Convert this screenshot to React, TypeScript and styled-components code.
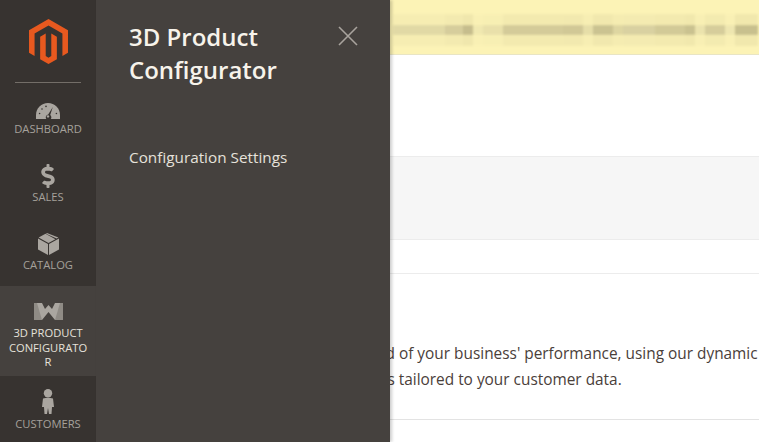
import React from 'react';
import styled, { createGlobalStyle } from 'styled-components';
import { FaDollarSign } from 'react-icons/fa';

const GlobalStyle = createGlobalStyle`
  html, body {
    margin: 0;
    padding: 0;
    background: #fff;
    font-family: 'Open Sans', 'Liberation Sans', sans-serif;
  }
`;

const Page = styled.div`
  display: flex;
  width: 759px;
  height: 442px;
  overflow: hidden;
`;

const Sidebar = styled.nav`
  flex: 0 0 96px;
  display: flex;
  flex-direction: column;
  background: #373330;
`;

const LogoBox = styled.div`
  flex: none;
  display: flex;
  justify-content: center;
  height: 83px;
  padding-top: 19px;
  box-sizing: border-box;
  margin: 0 15px;
  border-bottom: 1px solid #736e68;
  svg {
    width: 39px;
    height: 45px;
    fill: #e8591f;
  }
`;

const NavList = styled.div`
  flex: none;
  display: flex;
  flex-direction: column;
`;

const NavItem = styled.a<{ $active?: boolean; $top: number; $h: number }>`
  flex: none;
  display: flex;
  flex-direction: column;
  align-items: center;
  padding-top: ${(p) => p.$top}px;
  height: ${(p) => p.$h}px;
  box-sizing: border-box;
  background: ${(p) => (p.$active ? '#45413e' : 'transparent')};
  color: ${(p) => (p.$active ? '#e6e2db' : '#a5a19b')};
`;

const NavIcon = styled.div<{ $height: number }>`
  display: flex;
  align-items: center;
  justify-content: center;
  height: ${(p) => p.$height}px;
  svg {
    display: block;
    fill: #aaa6a0;
  }
`;

const NavLabel = styled.span`
  display: block;
  width: 82px;
  font-size: 11.2px;
  line-height: 14.6px;
  text-align: center;
  text-transform: uppercase;
  overflow-wrap: anywhere;
`;

const Content = styled.main`
  flex: 1;
  position: relative;
  min-width: 0;
  display: flex;
  flex-direction: column;
`;

const Panel = styled.aside`
  position: absolute;
  top: 0;
  left: 0;
  bottom: 0;
  width: 294px;
  padding: 20px 0 0 33px;
  box-sizing: border-box;
  background: #45413e;
  box-shadow: 2px 0 3px rgba(0, 0, 0, 0.2);
  z-index: 2;
`;

const PanelTitle = styled.h2`
  margin: 0;
  width: 200px;
  font-size: 24px;
  line-height: 33px;
  font-weight: 600;
  color: #f7f3eb;
`;

const CloseButton = styled.button`
  position: absolute;
  top: 26px;
  right: 32px;
  width: 20px;
  height: 20px;
  padding: 0;
  border: 0;
  background: none;
  svg {
    display: block;
    stroke: #a8a39d;
    stroke-width: 1.6;
  }
`;

const PanelLink = styled.a`
  display: block;
  margin-top: 60px;
  font-size: 15.3px;
  line-height: 22px;
  color: #e6e2db;
`;

const Banner = styled.div`
  flex: none;
  height: 55px;
  box-sizing: border-box;
  padding-top: 14px;
  background: #fcf3b6;
  border-bottom: 1px solid #e9e5c4;
  overflow: hidden;
`;

const BlurRow = styled.div<{ $pale?: boolean }>`
  display: flex;
  height: ${(p) => (p.$pale ? '11px' : '10px')};
  margin-left: 297px;
  filter: blur(1px);
  opacity: ${(p) => (p.$pale ? 0.2 : 0.95)};
`;

const BlurCell = styled.span<{ $w: number; $c: string }>`
  flex: 0 0 ${(p) => p.$w}px;
  background: ${(p) => p.$c};
`;

const Band = styled.section<{ $h: number; $grey?: boolean }>`
  flex: none;
  height: ${(p) => p.$h}px;
  box-sizing: border-box;
  background: ${(p) => (p.$grey ? '#f6f6f6' : '#fff')};
  border-bottom: 1px solid #ececec;
`;

const Intro = styled.section`
  flex: none;
  height: 146px;
  box-sizing: border-box;
  padding: 67px 0 0 30px;
  background: #fff;
  border-bottom: 1px solid #e3e3e3;
`;

const IntroText = styled.p`
  margin: 0;
  width: 633px;
  font-size: 15.4px;
  line-height: 26px;
  color: #4a403a;
`;

const Rest = styled.div`
  flex: 1;
  background: #fff;
`;

const cells: [number, string][] = [
  [52, '#e0d8a5'], [18, '#d4cb9b'], [10, '#c4bb8b'], [10, '#f0e8b0'], [20, '#e8e0aa'],
  [60, '#d2c998'], [20, '#cfc695'], [10, '#e5dda8'], [20, '#c9c190'], [10, '#ddd5a0'],
  [32, '#d8d0a0'], [30, '#d0c896'], [10, '#c8c08e'], [10, '#ebe3ad'], [20, '#d4cc9a'],
  [10, '#eee6b0'], [23, '#c6be8c'],
];

const BlurLine = ({ pale }: { pale?: boolean }) => (
  <BlurRow $pale={pale}>
    {cells.map(([w, c], i) => (
      <BlurCell key={i} $w={w} $c={c} />
    ))}
  </BlurRow>
);

const GaugeIcon = () => (
  <svg width="24" height="16" viewBox="0 0 24 16">
    <path d="M0 16V12C0 5.4 5.4 0 12 0s12 5.4 12 12v4z" />
    <g fill="#373330">
      <circle cx="3.6" cy="10.5" r="0.8" />
      <circle cx="6" cy="6" r="0.8" />
      <circle cx="10" cy="3.4" r="0.8" />
      <circle cx="20.4" cy="10.5" r="0.8" />
      <path d="M16.8 4l-2.6 8a2.8 2.8 0 1 1-2-.5z" />
    </g>
    <circle cx="12" cy="13.4" r="1.2" />
  </svg>
);

const BoxIcon = () => (
  <svg width="21" height="22" viewBox="0 0 21 22">
    <path d="M10 11L0 5.6V16.4L10 22z" />
    <path d="M11 11L21 5.6V16.4L11 22z" />
    <path d="M0.6 4.6L7.5 0.8 17.4 6.2 10.5 10z" />
    <path d="M9 0L20.4 4.6 18.6 5.6 8 0.8z" />
  </svg>
);

const WaveIcon = () => (
  <svg width="29" height="17" viewBox="0 0 29 17">
    <path d="M0 0H8L11 6 14.5 2 18 6 21 0H29V17H21L14.5 9 8 17H0z" />
    <path d="M0 0H3L8 17H0z" fill="#8f8b85" />
    <path d="M29 0H26L21 17H29z" fill="#8f8b85" />
  </svg>
);

const PersonIcon = () => (
  <svg width="14" height="25" viewBox="0 0 14 25">
    <circle cx="7" cy="4.2" r="4.2" />
    <path d="M2 9.5Q7 8 12 9.5L13 18H11L10.5 25H8L7 19 6 25H3.5L3 18H1z" />
  </svg>
);

const MagentoLogo = () => (
  <svg viewBox="1.6 0 20.8 24">
    <path d="M12 24l-4.455-2.572v-12l2.97-1.714v12.001l1.485.902 1.485-.902V7.714l2.971 1.714v12L12 24zM22.391 6v12l-2.969 1.714V7.714L12 3.429 4.574 7.714v12L1.609 18V6L12 0l10.391 6z" />
  </svg>
);

const App: React.FC = () => (
  <>
    <GlobalStyle />
    <Page>
      <Sidebar>
        <LogoBox>
          <MagentoLogo />
        </LogoBox>
        <NavList>
          <NavItem $top={16} $h={68}>
            <NavIcon $height={23}>
              <GaugeIcon />
            </NavIcon>
            <NavLabel>Dashboard</NavLabel>
          </NavItem>
          <NavItem $top={10} $h={68}>
            <NavIcon $height={29}>
              <FaDollarSign size={24} color="#aaa6a0" />
            </NavIcon>
            <NavLabel>Sales</NavLabel>
          </NavItem>
          <NavItem $top={10} $h={67}>
            <NavIcon $height={29}>
              <BoxIcon />
            </NavIcon>
            <NavLabel>Catalog</NavLabel>
          </NavItem>
          <NavItem $active $top={10} $h={90}>
            <NavIcon $height={30}>
              <WaveIcon />
            </NavIcon>
            <NavLabel>3D Product Configurator</NavLabel>
          </NavItem>
          <NavItem $top={10} $h={66}>
            <NavIcon $height={31}>
              <PersonIcon />
            </NavIcon>
            <NavLabel>Customers</NavLabel>
          </NavItem>
        </NavList>
      </Sidebar>
      <Content>
        <Banner>
          <BlurLine pale />
          <BlurLine />
          <BlurLine pale />
        </Banner>
        <Band $h={102} />
        <Band $h={83} $grey />
        <Band $h={34} />
        <Intro>
          <IntroText>
            Gain new insights and take command of your business' performance, using our dynamic product,
            order, and customer reports tailored to your customer data.
          </IntroText>
        </Intro>
        <Rest />
        <Panel>
          <PanelTitle>3D Product Configurator</PanelTitle>
          <CloseButton aria-label="Close">
            <svg width="20" height="20" viewBox="0 0 20 20">
              <path d="M1 1L19 19M19 1L1 19" />
            </svg>
          </CloseButton>
          <PanelLink>Configuration Settings</PanelLink>
        </Panel>
      </Content>
    </Page>
  </>
);

export default App;
